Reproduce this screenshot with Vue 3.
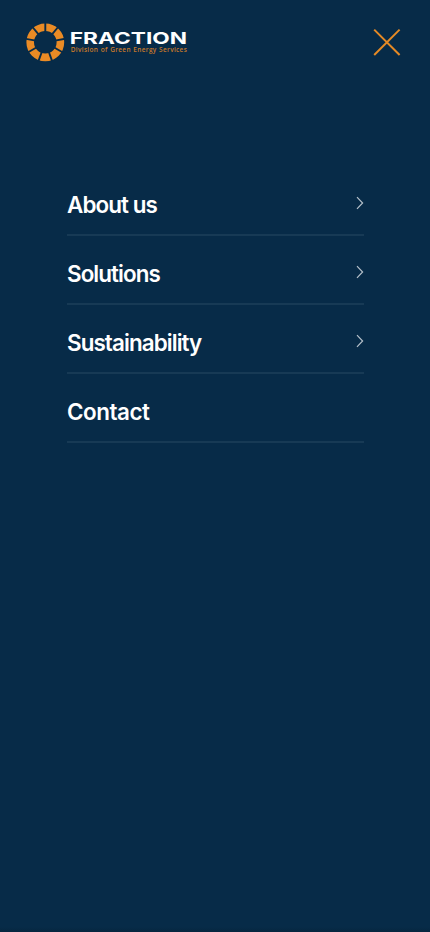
<script setup>
const items = [
  { label: 'About us', cls: 'about', arrow: true },
  { label: 'Solutions', cls: 'solutions', arrow: true },
  { label: 'Sustainability', cls: 'sustainability', arrow: true },
  { label: 'Contact', cls: 'contact', arrow: false },
]
const gaps = Array.from({ length: 9 }, (_, i) => i * 40)
</script>

<template>
  <div class="page">
    <header class="header">
      <svg class="logo" width="162" height="40" viewBox="0 0 162 40" role="img" aria-label="Fraction">
        <circle class="ring" cx="19.3" cy="19.3" r="15.1" />
        <line v-for="g in gaps" :key="g" class="cut" x1="19.3" y1="9.5" x2="19.3" y2="-1" :transform="`rotate(${g} 19.3 19.3)`" />
        <text class="name" x="43.8" y="21" textLength="117.2" lengthAdjust="spacingAndGlyphs">FRACTION</text>
        <text class="tag" x="44.8" y="28.5" textLength="116" lengthAdjust="spacing">Division of Green Energy Services</text>
      </svg>
      <button class="close" aria-label="Close menu">
        <svg width="28" height="28" viewBox="0 0 28 28"><path d="M1.2 1.6 26.6 27M26.6 1.6 1.2 27" /></svg>
      </button>
    </header>
    <nav class="menu">
      <a v-for="item in items" :key="item.label" class="row">
        <span class="label" :class="item.cls">{{ item.label }}</span>
        <svg v-if="item.arrow" class="arrow" width="8" height="14" viewBox="0 0 8 14"><path d="M1 1.2 6.6 7 1 12.8" /></svg>
      </a>
    </nav>
  </div>
</template>

<style>
body { background: #072b48; }
</style>

<style scoped>
.page {
  box-sizing: border-box;
  height: 932px;
  background: linear-gradient(#072b48 927px, #06263f 932px);
  font-family: Inter, "Liberation Sans", sans-serif;
}
.header {
  display: flex;
  justify-content: space-between;
  align-items: flex-start;
  height: 89px;
  padding: 23px 29px 0 26px;
}
.logo { display: block; }
.ring { fill: none; stroke: #ea8b25; stroke-width: 7.6; }
.cut { stroke: #072b48; stroke-width: 1.9; }
.name { fill: #fff; font: 700 16.2px Inter, sans-serif; }
.tag { fill: #c8792a; font: 600 6.5px "Open Sans", sans-serif; word-spacing: 0.5px; }
.close {
  width: 28px;
  height: 28px;
  margin-top: 5px;
  padding: 0;
  border: 0;
  background: none;
}
.close svg { display: block; }
.close path { stroke: #e58a25; stroke-width: 2; fill: none; }
.menu { padding: 55px 66px 0 67px; }
.row {
  box-sizing: border-box;
  display: flex;
  justify-content: space-between;
  height: 69px;
  padding-top: 21px;
  border-bottom: 2px solid #173a55;
  color: #fff;
}
.label { font-size: 22.4px; line-height: 30px; font-weight: 600; padding-top: 2px; }
.about { letter-spacing: -0.9px; }
.solutions { letter-spacing: -0.92px; }
.sustainability { letter-spacing: -0.9px; }
.contact { letter-spacing: -0.45px; }
.arrow { margin-top: 8px; }
.arrow path { fill: none; stroke: #b5c0ca; stroke-width: 1.2; }
</style>
